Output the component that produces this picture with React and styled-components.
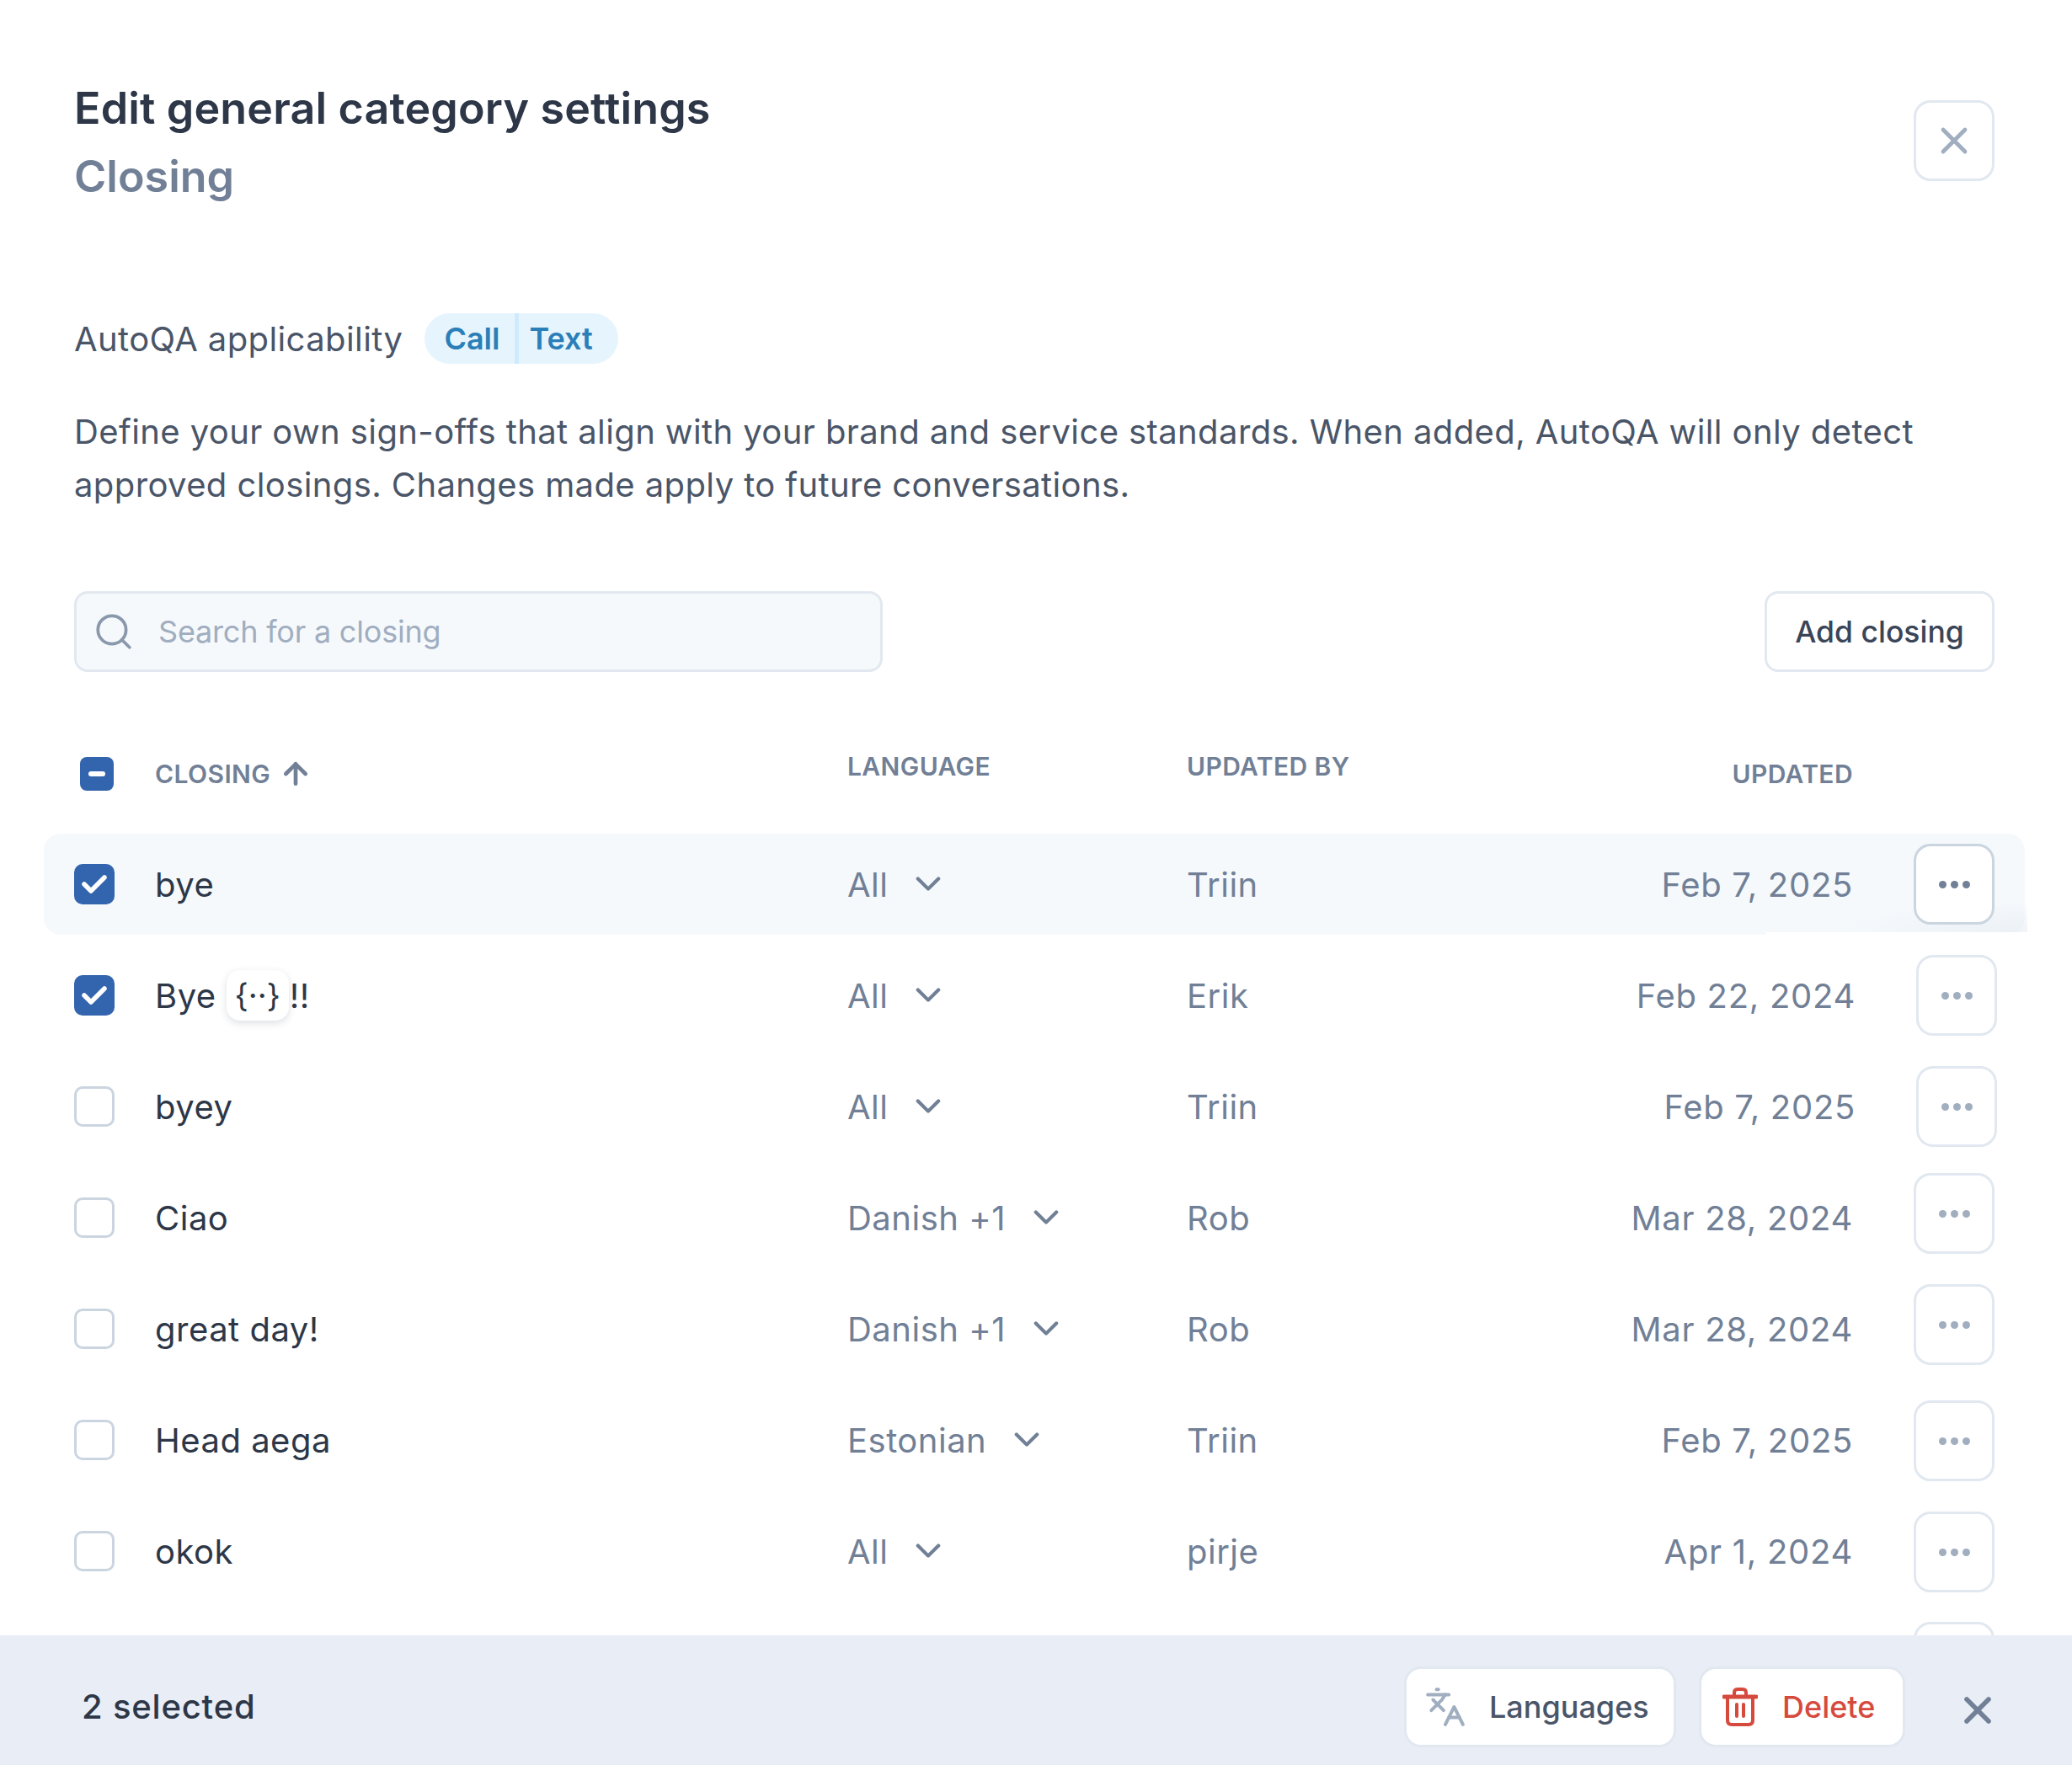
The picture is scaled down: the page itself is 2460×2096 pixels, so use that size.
import React from 'react';
import styled, { createGlobalStyle } from 'styled-components';
import { Languages, Search, X, ArrowUp } from 'lucide-react';

const GlobalStyle = createGlobalStyle`
  html, body { margin: 0; padding: 0; background: #fff; }
  * { box-sizing: border-box; }
  body { font-family: Inter, "Liberation Sans", sans-serif; }
`;

const Page = styled.div`
  width: 2460px;
  height: 2096px;
  display: flex;
  flex-direction: column;
  overflow: hidden;
  background: #fff;
`;
const Content = styled.div`
  flex: 1;
  min-height: 0;
  overflow: hidden;
  padding: 88px 92px 0 88px;
`;
const Header = styled.div`
  display: flex;
  justify-content: space-between;
  align-items: flex-start;
  height: 162px;
`;
const Title = styled.h1`
  margin: 0;
  font-size: 52px;
  line-height: 81px;
  font-weight: 600;
  letter-spacing: 0.15px;
  color: #2d3748;
`;
const SubTitle = styled.h2`
  margin: 0;
  font-size: 52px;
  line-height: 81px;
  font-weight: 600;
  color: #718096;
`;
const OutlineButton = styled.button`
  width: 96px;
  height: 96px;
  padding: 0;
  display: flex;
  align-items: center;
  justify-content: center;
  flex: none;
  background: #fff;
  border: 3px solid ${p => (p.$active ? '#cbd5e0' : '#e2e8f0')};
  border-radius: 20px;
  color: ${p => (p.$active ? '#718096' : '#a0aec0')};
`;
const CloseButton = styled(OutlineButton)`
  margin-top: 31px;
`;
const Applicability = styled.div`
  display: flex;
  align-items: center;
  gap: 26px;
  margin-top: 122px;
  height: 60px;
`;
const ApplicabilityLabel = styled.span`
  font-size: 40px;
  letter-spacing: 0.4px;
  color: #4a5568;
`;
const Pill = styled.div`
  display: flex;
  height: 60px;
  align-items: stretch;
  border-radius: 30px;
  background: #e6f4fd;
  color: #2b7fb8;
  font-size: 36px;
  font-weight: 600;
`;
const PillPart = styled.span`
  display: flex;
  align-items: center;
  padding: ${p => (p.$first ? '0 18px 0 23px' : '0 30px 0 12px')};
  border-right: ${p => (p.$first ? '5px solid #cfeafc' : 'none')};
`;
const Description = styled.p`
  margin: 49px 0 0;
  font-size: 40px;
  line-height: 63px;
  letter-spacing: 0.4px;
  color: #4a5568;
`;
const Toolbar = styled.div`
  display: flex;
  justify-content: space-between;
  margin-top: 95px;
`;
const SearchBox = styled.div`
  width: 960px;
  height: 96px;
  display: flex;
  align-items: center;
  gap: 28px;
  padding-left: 19px;
  background: #f6f9fc;
  border: 3px solid #e2e8f0;
  border-radius: 16px;
  font-size: 36px;
  letter-spacing: -0.2px;
  color: #a0aec0;
`;
const AddButton = styled.button`
  width: 273px;
  height: 96px;
  padding: 0;
  background: #fff;
  border: 3px solid #e2e8f0;
  border-radius: 16px;
  font-family: inherit;
  font-size: 35.5px;
  font-weight: 500;
  color: #3a4558;
`;
const columns = '96px 822px 403px 300px 1fr 96px';
const HeaderRow = styled.div`
  display: grid;
  grid-template-columns: ${columns};
  align-items: center;
  height: 192px;
  padding-top: 50px;
  font-size: 30px;
  font-weight: 600;
  letter-spacing: 0.4px;
  color: #718096;
`;
const HeadCell = styled.div`
  display: flex;
  align-items: center;
  gap: 10px;
  margin-bottom: ${p => (p.$raised ? '18px' : '0')};
  justify-content: ${p => (p.$right ? 'flex-end' : 'flex-start')};
  padding-right: ${p => (p.$right ? '72px' : '0')};
`;
const HeadCheck = styled.div`
  width: 40px;
  height: 40px;
  margin-left: 7px;
  display: flex;
  align-items: center;
  justify-content: center;
  border-radius: 8px;
  background: #3364ae;
`;
const Dash = styled.div`
  width: 20px;
  height: 6px;
  border-radius: 3px;
  background: #fff;
`;
const Rows = styled.div`
  display: flex;
  flex-direction: column;
  gap: 12px;
  margin: 0 -36px;
`;
const Row = styled.div`
  position: relative;
  display: grid;
  grid-template-columns: ${columns};
  align-items: center;
  height: 120px;
  padding: 0 36px;
  flex: none;
  border-radius: 20px;
  background: ${p => (p.$highlight ? '#f5f9fc' : 'transparent')};
  font-size: 40px;
  letter-spacing: 0.5px;
  color: #718096;
  ${p => p.$highlight && `
    &::after {
      content: '';
      position: absolute;
      right: -3px;
      bottom: 0;
      width: 310px;
      height: 42px;
      border-bottom: 3px solid #fff;
      border-bottom-right-radius: 3px;
      background: radial-gradient(ellipse 70% 90% at 100% 100%, rgba(226,232,240,0.5), rgba(226,232,240,0));
      pointer-events: none;
    }
  `}
`;
const Box = styled.div`
  width: 48px;
  height: 48px;
  display: flex;
  align-items: center;
  justify-content: center;
  border-radius: 10px;
  background: ${p => (p.$checked ? '#3364ae' : '#fff')};
  border: ${p => (p.$checked ? 'none' : '3px solid #cbd5e0')};
`;
const Name = styled.div`
  display: flex;
  align-items: center;
  color: #2d3748;
`;
const Token = styled.span`
  width: 74px;
  height: 60px;
  margin: 0 1px 0 12px;
  display: flex;
  align-items: center;
  justify-content: center;
  border-radius: 16px;
  background: #fff;
  box-shadow: 0 3px 10px rgba(45, 55, 72, 0.16);
  font-size: 38px;
  letter-spacing: 0;
`;
const LanguageCell = styled.div`
  display: flex;
  align-items: center;
  gap: 33px;
`;
const DateCell = styled.div`
  text-align: right;
  letter-spacing: 0.7px;
  padding-right: ${p => 72 - p.$dx}px;
`;
const MoreButton = styled(OutlineButton)`
  position: relative;
  z-index: 1;
  align-self: start;
  margin-top: ${p => p.$top}px;
  margin-left: ${p => p.$dx}px;
`;
const Dots = styled.div`
  display: flex;
  gap: 5px;
`;
const DotMark = styled.span`
  width: 9px;
  height: 9px;
  border-radius: 50%;
  background: currentColor;
`;
const Bar = styled.div`
  height: 154px;
  flex: none;
  display: flex;
  align-items: center;
  padding: 15px 86px 0 97px;
  background: #e9eef6;
`;
const Selected = styled.span`
  font-size: 40px;
  font-weight: 500;
  letter-spacing: 0.8px;
  white-space: nowrap;
  color: #2d3748;
`;
const BarButton = styled.button`
  height: 96px;
  width: ${p => p.$width}px;
  display: flex;
  align-items: center;
  gap: ${p => p.$gap}px;
  padding: 0 0 0 ${p => p.$pad}px;
  background: #fff;
  border: 3px solid #e2e8f0;
  border-radius: 20px;
  font-family: inherit;
  font-size: 36px;
  font-weight: 500;
  color: ${p => (p.$danger ? '#d64a3e' : '#4a5568')};
`;
const LanguagesButton = styled(BarButton)`
  margin-left: auto;
`;
const DeleteButton = styled(BarButton)`
  margin-left: 27px;
`;
const BarClose = styled.div`
  display: flex;
  margin-left: 60px;
  margin-top: 9px;
  color: #718096;
`;

const ChevronIcon = () => (
  <svg width="30" height="20" viewBox="0 0 32 20" fill="none" stroke="#718096" strokeWidth="4.5" strokeLinecap="round" strokeLinejoin="round">
    <path d="M3 3 L16 16 L29 3" />
  </svg>
);
const CheckIcon = () => (
  <svg width="30" height="24" viewBox="0 0 30 24" fill="none" stroke="#fff" strokeWidth="5.5" strokeLinecap="round" strokeLinejoin="round">
    <path d="M3 12 L11 20 L27 4" />
  </svg>
);
const TrashIcon = () => (
  <svg width="42" height="46" viewBox="0 0 42 46" fill="none" stroke="#d64a3e" strokeWidth="4" strokeLinecap="round" strokeLinejoin="round">
    <path d="M2 11 H40" strokeWidth="5" />
    <path d="M14 10 V6 Q14 2 18 2 H24 Q28 2 28 6 V10" />
    <path d="M6 11 V39 Q6 44 11 44 H31 Q36 44 36 39 V11" />
    <path d="M17 20 V34 M25 20 V34" />
  </svg>
);
const MoreDots = () => (
  <Dots>
    <DotMark />
    <DotMark />
    <DotMark />
  </Dots>
);

const rows = [
  { name: 'bye', lang: 'All', by: 'Triin', date: 'Feb 7, 2025', checked: true, top: 12, dx: 0, highlight: true },
  { name: 'Bye', token: true, lang: 'All', by: 'Erik', date: 'Feb 22, 2024', checked: true, top: 12, dx: 3 },
  { name: 'byey', lang: 'All', by: 'Triin', date: 'Feb 7, 2025', top: 12, dx: 3 },
  { name: 'Ciao', lang: 'Danish +1', by: 'Rob', date: 'Mar 28, 2024', top: 7, dx: 0 },
  { name: 'great day!', lang: 'Danish +1', by: 'Rob', date: 'Mar 28, 2024', top: 7, dx: 0 },
  { name: 'Head aega', lang: 'Estonian', by: 'Triin', date: 'Feb 7, 2025', top: 13, dx: 0 },
  { name: 'okok', lang: 'All', by: 'pirje', date: 'Apr 1, 2024', top: 13, dx: 0 },
];

const App = () => {
  return (
    <Page>
      <GlobalStyle />
      <Content>
        <Header>
          <div>
            <Title>Edit general category settings</Title>
            <SubTitle>Closing</SubTitle>
          </div>
          <CloseButton>
            <X size={52} strokeWidth={2.2} />
          </CloseButton>
        </Header>
        <Applicability>
          <ApplicabilityLabel>AutoQA applicability</ApplicabilityLabel>
          <Pill>
            <PillPart $first>Call</PillPart>
            <PillPart>Text</PillPart>
          </Pill>
        </Applicability>
        <Description>
          Define your own sign-offs that align with your brand and service standards. When added, AutoQA will only detect
          approved closings. Changes made apply to future conversations.
        </Description>
        <Toolbar>
          <SearchBox>
            <Search size={50} strokeWidth={1.8} color="#8a98ac" />
            Search for a closing
          </SearchBox>
          <AddButton>Add closing</AddButton>
        </Toolbar>
        <HeaderRow>
          <HeadCheck>
            <Dash />
          </HeadCheck>
          <HeadCell>
            CLOSING <ArrowUp size={40} strokeWidth={2.8} />
          </HeadCell>
          <HeadCell $raised>LANGUAGE</HeadCell>
          <HeadCell $raised>UPDATED BY</HeadCell>
          <HeadCell $right>UPDATED</HeadCell>
          <div />
        </HeaderRow>
        <Rows>
          {rows.map(r => (
            <Row key={r.name} $highlight={r.highlight}>
              <Box $checked={r.checked}>{r.checked && <CheckIcon />}</Box>
              <Name>
                {r.name}
                {r.token && (
                  <>
                    <Token>{'{··}'}</Token>!!
                  </>
                )}
              </Name>
              <LanguageCell>
                {r.lang}
                <ChevronIcon />
              </LanguageCell>
              <div>{r.by}</div>
              <DateCell $dx={r.dx}>{r.date}</DateCell>
              <MoreButton $active={r.highlight} $top={r.top} $dx={r.dx}>
                <MoreDots />
              </MoreButton>
            </Row>
          ))}
          <Row>
            <div />
            <div />
            <div />
            <div />
            <div />
            <MoreButton $top={12} $dx={0}>
              <MoreDots />
            </MoreButton>
          </Row>
        </Rows>
      </Content>
      <Bar>
        <Selected>2 selected</Selected>
        <LanguagesButton $width={323} $gap={27} $pad={21}>
          <Languages size={50} strokeWidth={1.9} color="#a0aec0" />
          Languages
        </LanguagesButton>
        <DeleteButton $danger $width={245} $gap={29} $pad={25}>
          <TrashIcon />
          Delete
        </DeleteButton>
        <BarClose>
          <X size={52} strokeWidth={2.6} />
        </BarClose>
      </Bar>
    </Page>
  );
};

export default App;
